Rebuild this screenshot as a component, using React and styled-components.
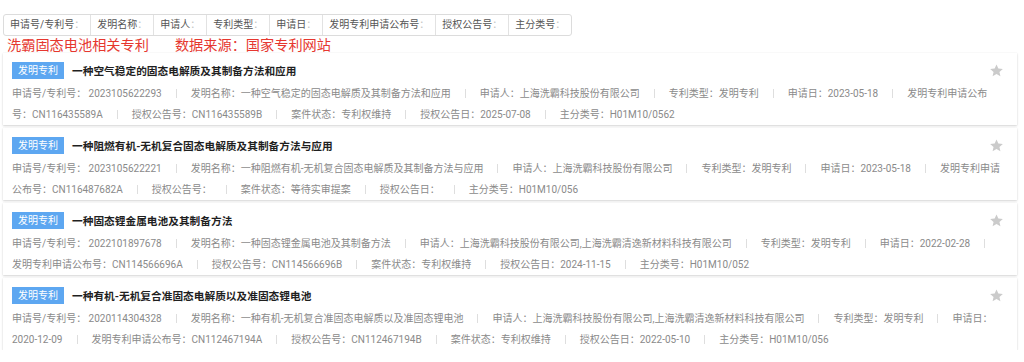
import React from 'react';
import styled, { createGlobalStyle } from 'styled-components';

const FILTERS = ['申请号/专利号', '发明名称', '申请人', '专利类型', '申请日', '发明专利申请公布号', '授权公告号', '主分类号'];

const PATENTS = [
  {
    title: '一种空气稳定的固态电解质及其制备方法和应用',
    no: '2023105622293',
    applicant: '上海洗霸科技股份有限公司',
    date: '2023-05-18',
    pub: 'CN116435589A',
    grant: 'CN116435589B',
    status: '专利权维持',
    grantDate: '2025-07-08',
    cls: 'H01M10/0562',
  },
  {
    title: '一种阻燃有机-无机复合固态电解质及其制备方法与应用',
    no: '2023105622221',
    applicant: '上海洗霸科技股份有限公司',
    date: '2023-05-18',
    pub: 'CN116487682A',
    grant: '',
    status: '等待实审提案',
    grantDate: '',
    cls: 'H01M10/056',
  },
  {
    title: '一种固态锂金属电池及其制备方法',
    no: '2022101897678',
    applicant: '上海洗霸科技股份有限公司,上海洗霸清逸新材料科技有限公司',
    date: '2022-02-28',
    pub: 'CN114566696A',
    grant: 'CN114566696B',
    status: '专利权维持',
    grantDate: '2024-11-15',
    cls: 'H01M10/052',
  },
  {
    title: '一种有机-无机复合准固态电解质以及准固态锂电池',
    no: '2020114304328',
    applicant: '上海洗霸科技股份有限公司,上海洗霸清逸新材料科技有限公司',
    date: '2020-12-09',
    pub: 'CN112467194A',
    grant: 'CN112467194B',
    status: '专利权维持',
    grantDate: '2022-05-10',
    cls: 'H01M10/056',
  },
];

const GlobalStyle = createGlobalStyle`
  body {
    margin: 0;
    background: #fff;
    font-family: Roboto, "Noto Sans CJK SC", sans-serif;
  }
`;

// label/value pairs shown in the grey info block of each card
const metaFields = (p) => [
  ['申请号/专利号：', ' ' + p.no],
  ['发明名称：', p.title],
  ['申请人：', p.applicant],
  ['专利类型：', '发明专利'],
  ['申请日：', p.date],
  ['发明专利申请公布号：', p.pub],
  ['授权公告号：', p.grant],
  ['案件状态：', p.status],
  ['授权公告日：', p.grantDate],
  ['主分类号：', p.cls],
];

const Star = () => (
  <StarIcon viewBox="0 0 24 24">
    <path d="M12 2.2l2.95 6.6 7.2.7-5.45 4.8 1.6 7.05L12 17.7l-6.3 3.65 1.6-7.05L1.85 9.5l7.2-.7z" />
  </StarIcon>
);

const App = () => (
  <Page>
    <GlobalStyle />
    <Toolbar>
      {FILTERS.map((f) => (
        <Filter key={f}>
          {f}
          <Colon>：</Colon>
        </Filter>
      ))}
    </Toolbar>
    <Heading>
      <span>洗霸固态电池相关专利</span>
      <span>数据来源：国家专利网站</span>
    </Heading>
    <List>
      {PATENTS.map((p) => (
        <Card key={p.no}>
          <CardHead>
            <Badge>发明专利</Badge>
            <Title>{p.title}</Title>
            <Star />
          </CardHead>
          <Meta>
            {metaFields(p).map(([label, value], i) => (
              <React.Fragment key={label}>
                {i > 0 && <Sep />}
                {label + value}
              </React.Fragment>
            ))}
          </Meta>
        </Card>
      ))}
    </List>
  </Page>
);

const Page = styled.div`
  padding: 13px 7px 0 3px;
`;

const Toolbar = styled.div`
  display: inline-flex;
  height: 22px;
  box-sizing: border-box;
  border: 1px solid #dcdcdc;
  border-radius: 3px;
  background: #fff;
`;

const Filter = styled.div`
  padding: 0 6px;
  font-size: 10px;
  line-height: 20px;
  color: #555;
  white-space: nowrap;
  & + & {
    border-left: 1px solid #e2e2e2;
  }
`;

const Colon = styled.span`
  color: #c4c4c4;
`;

const Heading = styled.div`
  display: flex;
  gap: 26px;
  margin-top: 1px;
  padding-left: 4px;
  height: 16px;
  font-size: 14.2px;
  line-height: 16px;
  color: #e6372f;
`;

const List = styled.div`
  display: flex;
  flex-direction: column;
  gap: 3px;
`;

const Card = styled.div`
  background: #fff;
  padding: 9px 13px 0 9px;
  box-shadow: 0 1px 2px rgba(0, 0, 0, 0.16), 0 0 1px rgba(0, 0, 0, 0.08);
`;

const CardHead = styled.div`
  display: flex;
  align-items: center;
  height: 17px;
`;

const Badge = styled.span`
  padding: 0 6px;
  background: #5da7f1;
  color: #fff;
  font-size: 10px;
  line-height: 17px;
`;

const Title = styled.span`
  margin-left: 8px;
  font-size: 10.7px;
  font-weight: 700;
  color: #1f1f1f;
`;

const StarIcon = styled.svg`
  width: 15px;
  height: 15px;
  margin-left: auto;
  fill: #cbcbcb;
`;

const Meta = styled.div`
  margin-top: 4px;
  font-size: 10px;
  line-height: 21px;
  color: #8a8a8a;
`;

const Sep = styled.span`
  display: inline-block;
  width: 1px;
  height: 9px;
  margin: 0 14px;
  background: #dedede;
  vertical-align: -1px;
`;

export default App;
